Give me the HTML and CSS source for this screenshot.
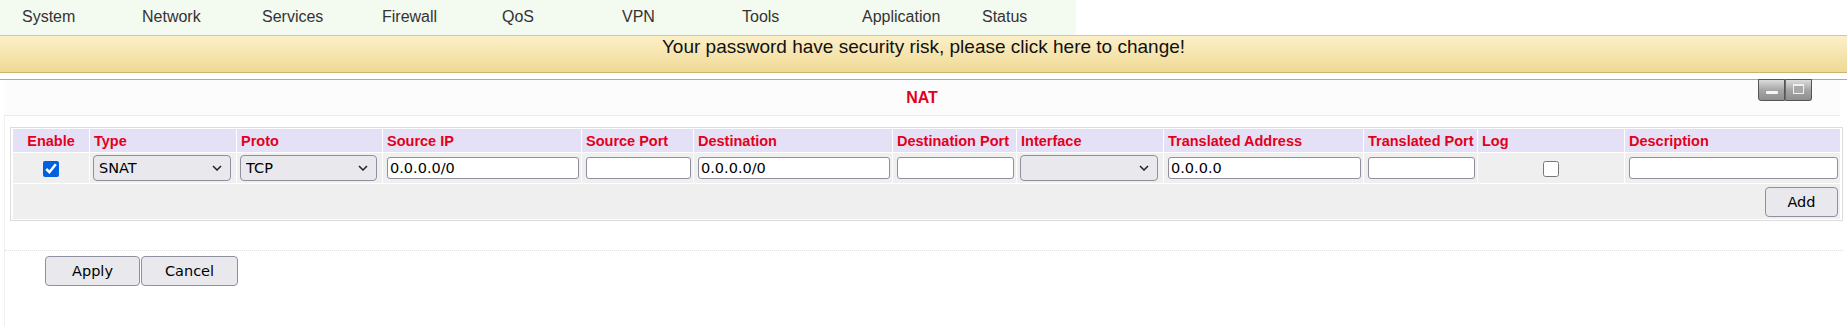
FILE: index.html
```html
<!DOCTYPE html>
<html lang="en">
<head>
    <meta charset="UTF-8">
    <meta name="viewport" content="width=device-width, initial-scale=1.0">
    <title>NAT</title>
    <link rel="stylesheet" href="styles.css">
</head>
<body>
    <ul class="menu">
        <li><a href="#">System</a></li>
        <li><a href="#">Network</a></li>
        <li><a href="#">Services</a></li>
        <li><a href="#">Firewall</a></li>
        <li><a href="#">QoS</a></li>
        <li><a href="#">VPN</a></li>
        <li><a href="#">Tools</a></li>
        <li><a href="#">Application</a></li>
        <li><a href="#">Status</a></li>
    </ul>
    <div class="notice"><a href="#">Your password have security risk, please click here to change!</a></div>

    <div class="panel">
        <div class="panel-title">
            NAT
            <div class="win-btns">
                <span class="wb wb-min"></span>
                <span class="wb wb-max"></span>
            </div>
        </div>
        <div class="panel-body">
            <div class="tbl-box">
                <table class="rules">
                    <colgroup>
                        <col style="width:76px">
                        <col style="width:146px">
                        <col style="width:145px">
                        <col style="width:198px">
                        <col style="width:111px">
                        <col style="width:198px">
                        <col style="width:123px">
                        <col style="width:146px">
                        <col style="width:199px">
                        <col style="width:113px">
                        <col style="width:146px">
                        <col style="width:215px">
                    </colgroup>
                    <tr class="head">
                        <th class="center">Enable</th>
                        <th>Type</th>
                        <th>Proto</th>
                        <th>Source IP</th>
                        <th>Source Port</th>
                        <th>Destination</th>
                        <th>Destination Port</th>
                        <th>Interface</th>
                        <th>Translated Address</th>
                        <th>Translated Port</th>
                        <th>Log</th>
                        <th>Description</th>
                    </tr>
                    <tr class="row">
                        <td class="center"><input type="checkbox" class="chk" checked></td>
                        <td>
                            <span class="sel">
                                <select><option>SNAT</option><option>DNAT</option></select>
                                <svg class="chev" width="10" height="6" viewBox="0 0 10 6"><path d="M1 1L5 5L9 1" fill="none" stroke="#222" stroke-width="1.5"/></svg>
                            </span>
                        </td>
                        <td>
                            <span class="sel">
                                <select><option>TCP</option><option>UDP</option></select>
                                <svg class="chev" width="10" height="6" viewBox="0 0 10 6"><path d="M1 1L5 5L9 1" fill="none" stroke="#222" stroke-width="1.5"/></svg>
                            </span>
                        </td>
                        <td><input type="text" class="txt" value="0.0.0.0/0"></td>
                        <td><input type="text" class="txt"></td>
                        <td><input type="text" class="txt" value="0.0.0.0/0"></td>
                        <td><input type="text" class="txt"></td>
                        <td>
                            <span class="sel">
                                <select><option></option></select>
                                <svg class="chev" width="10" height="6" viewBox="0 0 10 6"><path d="M1 1L5 5L9 1" fill="none" stroke="#222" stroke-width="1.5"/></svg>
                            </span>
                        </td>
                        <td><input type="text" class="txt" value="0.0.0.0"></td>
                        <td><input type="text" class="txt"></td>
                        <td class="center"><input type="checkbox" class="chk"></td>
                        <td><input type="text" class="txt"></td>
                    </tr>
                    <tr class="foot">
                        <td colspan="12"><button type="button" class="btn btn-add">Add</button></td>
                    </tr>
                </table>
            </div>
            <div class="actions">
                <button type="button" class="btn btn-apply">Apply</button><button type="button" class="btn btn-cancel">Cancel</button>
            </div>
        </div>
    </div>
</body>
</html>
```

FILE: styles.css
```css
body {
    margin: 0;
    font-family: "Liberation Sans", Arial, sans-serif;
    background: #fff;
    color: #000;
}
a {
    color: inherit;
    text-decoration: none;
}

/* top menu */
.menu {
    display: flex;
    width: 1076px;
    height: 35px;
    margin: 0;
    padding: 0;
    list-style: none;
    overflow: hidden;
    background: #f3faf0;
}
.menu li {
    flex: none;
    width: 120px;
    box-sizing: border-box;
    padding-left: 22px;
    font-size: 16px;
    line-height: 33px;
    color: #333;
}

/* password warning */
.notice {
    height: 36px;
    border-top: 1px solid #d9c78e;
    border-bottom: 1px solid #c9b470;
    background: linear-gradient(#fcf0c9, #efd993);
    text-align: center;
    font-size: 19px;
    line-height: 22px;
    color: #111;
}

/* panel */
.panel {
    margin-top: 6px;
    border-top: 1px solid #a9a9a9;
}
.panel-title {
    position: relative;
    height: 35px;
    margin: 0 7px 0 4px;
    background: #fcfcfc;
    border-bottom: 1px solid #ebebeb;
    text-align: center;
    font-size: 16px;
    font-weight: bold;
    line-height: 35px;
    color: #e3001b;
}
.win-btns {
    position: absolute;
    top: -1px;
    right: 28px;
    display: flex;
}
.wb {
    display: flex;
    justify-content: center;
    width: 27px;
    height: 22px;
    box-sizing: border-box;
    border: 1px solid #555;
    background: linear-gradient(#dcdcdc, #a6a6a6 50%, #8e8e8e);
}
.wb-min {
    align-items: flex-end;
    padding-bottom: 6px;
    border-radius: 0 0 0 3px;
}
.wb-min::after {
    content: "";
    width: 12px;
    height: 3px;
    background: #f6f6f6;
    border-radius: 1px;
}
.wb-max {
    align-items: flex-start;
    padding-top: 4px;
    border-left-color: #6a6a6a;
    border-radius: 0 0 3px 0;
}
.wb-max::after {
    content: "";
    width: 9px;
    height: 7px;
    border: 1px solid #f0f0f0;
    border-top-width: 2px;
    background: #a8a8a8;
}

.panel-body {
    margin: 0 4px;
    border-left: 1px solid #f0f0f0;
    padding: 11px 0 40px 5px;
}

/* rules table */
.tbl-box {
    border: 1px solid #dcdcdc;
    padding: 0 1px;
}
.rules {
    width: 100%;
    table-layout: fixed;
    border-collapse: separate;
    border-spacing: 1px;
}
.rules th {
    height: 23px;
    padding: 0 0 0 4px;
    background: #e4e0f5;
    text-align: left;
    font-size: 14.5px;
    font-weight: bold;
    color: #e3001b;
    white-space: nowrap;
    overflow: hidden;
}
.rules td {
    height: 30px;
    padding: 0 2px 0 4px;
    background: #efefef;
    vertical-align: middle;
}
.rules .center {
    text-align: center;
    padding: 0;
}
.rules .foot td {
    height: 30px;
    padding: 3px 2px 2px;
    text-align: right;
}

.txt {
    display: block;
    width: 100%;
    height: 22px;
    box-sizing: border-box;
    margin: 0;
    padding: 0 2px;
    border: 1px solid #8f8f9d;
    border-radius: 3px;
    background: #fff;
    font-family: "DejaVu Sans", sans-serif;
    font-size: 14.5px;
    color: #000;
}
.sel {
    position: relative;
    display: block;
    margin: 0 3px 0 -1px;
}
.sel select {
    display: block;
    width: 100%;
    height: 26px;
    margin: 0;
    padding: 0 0 0 5px;
    appearance: none;
    border: 1px solid #8f8f9d;
    border-radius: 4px;
    background: #e9e9ed;
    font-family: "DejaVu Sans", sans-serif;
    font-size: 14.5px;
    color: #000;
}
.chev {
    position: absolute;
    right: 9px;
    top: 10px;
    pointer-events: none;
}
.chk {
    display: inline-block;
    width: 16px;
    height: 16px;
    margin: 0;
    vertical-align: middle;
    accent-color: #0060df;
}

/* buttons */
.btn {
    height: 30px;
    margin: 0;
    padding: 0;
    border: 1px solid #8f8f9d;
    border-radius: 4px;
    background: #e9e9ed;
    font-family: "DejaVu Sans", sans-serif;
    font-size: 14.5px;
    color: #000;
    cursor: pointer;
}
.btn-add {
    width: 73px;
}
.actions {
    display: flex;
    gap: 1px;
    margin: 29px 0 0 -5px;
    padding: 5px 0 0 40px;
    border-top: 1px dotted #e0e0e0;
}
.btn-apply {
    width: 95px;
}
.btn-cancel {
    width: 97px;
}
```
